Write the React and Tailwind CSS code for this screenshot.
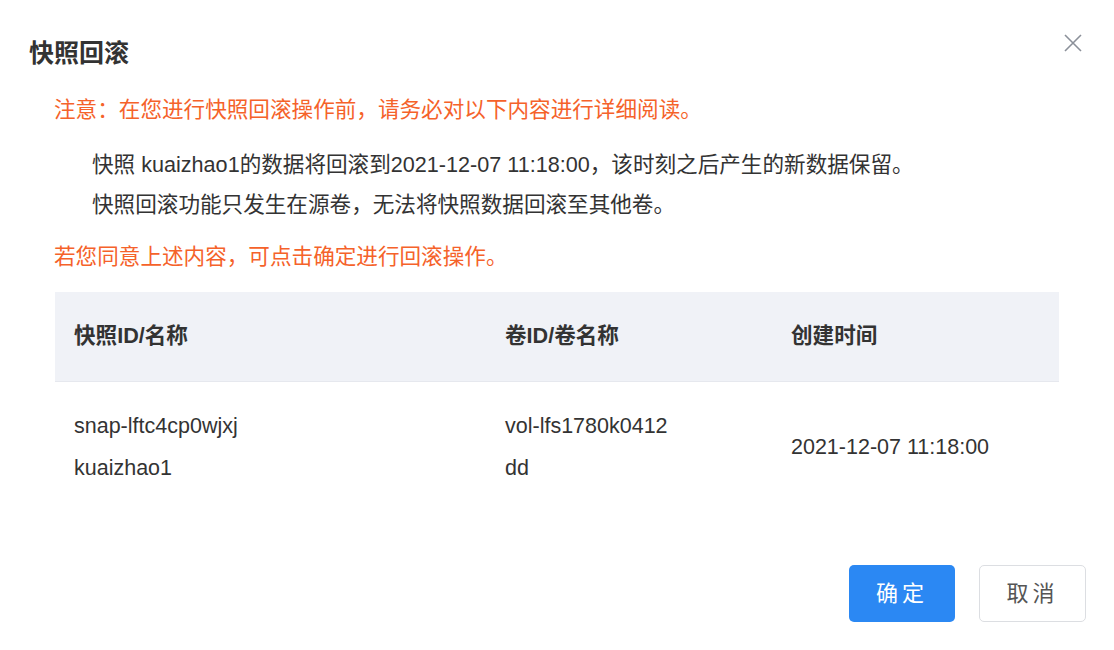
export default function App() {
  const font = { fontFamily: '"Liberation Sans", "Noto Sans CJK SC", sans-serif' };
  return (
    <div className="w-[1114px] h-[650px] bg-white text-[#333] relative" style={font}>
      {/* close */}
      <button className="absolute right-[31px] top-[33px] w-[20px] h-[20px] text-[#8b9099]">
        <svg viewBox="0 0 20 20" width="20" height="20" fill="none" stroke="currentColor" strokeWidth="1.6">
          <path d="M2 2 L18 18 M18 2 L2 18" />
        </svg>
      </button>

      <div className="pt-[36px] pl-[29px] pr-[55px]">
        <h2 className="text-[25px] leading-[34px] font-bold text-[#333]">快照回滚</h2>

        <div className="pl-[25px] mt-[20px] text-[21.6px] leading-[40px]">
          <p className="text-[#f5622a]">注意：在您进行快照回滚操作前，请务必对以下内容进行详细阅读。</p>
          <div className="pl-[38px] pt-[15px] text-[#333]">
            <p>快照 kuaizhao1的数据将回滚到2021-12-07 11:18:00，该时刻之后产生的新数据保留。</p>
            <p>快照回滚功能只发生在源卷，无法将快照数据回滚至其他卷。</p>
          </div>
          <p className="text-[#f5622a] pt-[12px]">若您同意上述内容，可点击确定进行回滚操作。</p>
        </div>

        <div className="ml-[26px] mt-[15px] w-[1004px]">
          <div className="grid grid-cols-[431px_286px_287px] h-[90px] bg-[#f0f2f7] border-b border-[#e6e8ee] items-center text-[21.6px] font-bold text-[#333]">
            <div className="pl-[19px]">快照ID/名称</div>
            <div className="pl-[19px]">卷ID/卷名称</div>
            <div className="pl-[19px]">创建时间</div>
          </div>
          <div className="grid grid-cols-[431px_286px_287px] items-center text-[21.5px] leading-[42px] text-[#333] py-[23px]">
            <div className="pl-[19px]">
              <div>snap-lftc4cp0wjxj</div>
              <div>kuaizhao1</div>
            </div>
            <div className="pl-[19px]">
              <div>vol-lfs1780k0412</div>
              <div>dd</div>
            </div>
            <div className="pl-[19px]">2021-12-07 11:18:00</div>
          </div>
        </div>
      </div>

      <div className="absolute right-[28px] bottom-[28px] flex gap-[24px]">
        <button className="w-[106px] h-[57px] rounded-[5px] bg-[#2b88f3] text-white text-[22px] tracking-[4px]">确定</button>
        <button className="w-[107px] h-[57px] rounded-[5px] border border-[#dcdee2] bg-white text-[#555] text-[22px] tracking-[4px]">取消</button>
      </div>
    </div>
  );
}
